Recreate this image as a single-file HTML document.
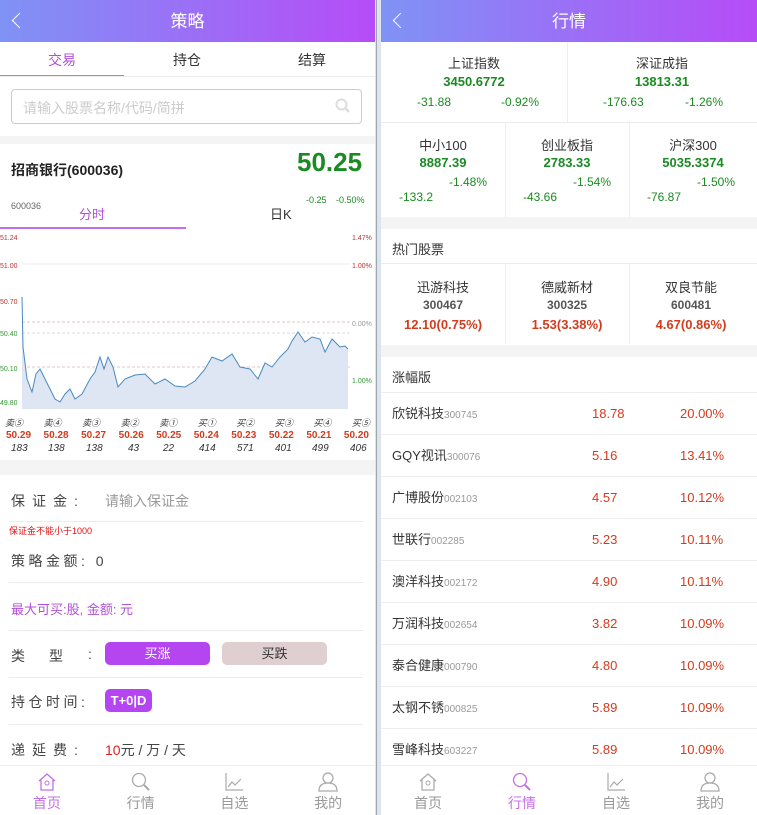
<!DOCTYPE html>
<html><head><meta charset="utf-8"><style>
*{margin:0;padding:0;box-sizing:border-box}
body{width:757px;height:815px;overflow:hidden;background:#dfe3ee;font-family:"Liberation Sans","Noto Sans CJK SC",sans-serif;position:relative}
.p{position:absolute;top:0;height:815px;background:#fff;overflow:hidden}
.a{position:absolute;white-space:nowrap}
.hd{position:absolute;left:0;top:0;height:42px;width:100%;background:linear-gradient(90deg,#7f93f5,#b64cf7);color:#fff;font-size:17px;text-align:center;line-height:44px}
.bk{position:absolute;left:14px;top:15px;width:11px;height:11px;border-left:1.5px solid #fff;border-bottom:1.5px solid #fff;transform:rotate(45deg)}
.g{color:#1b8a22}.r{color:#d23c1e}
.hl{position:absolute;height:1px;background:#ececec}
.tab{position:absolute;bottom:0;height:50px;left:0;width:100%;background:#fff;border-top:1px solid #eee}
.ti{position:absolute;top:0;width:25%;text-align:center;color:#999;font-size:14px}
.ti span{position:absolute;top:27px;left:0;width:100%}
.ti svg{position:absolute;top:5px;left:50%;margin-left:-11px}
.row{position:relative;height:42px;line-height:42px;border-bottom:1px solid #eee}
.row span{position:absolute;top:0}
.row small{font-size:10px;color:#999}
</style></head><body>
<!-- LEFT -->
<div class="p" style="left:0;width:375px">
<div class="hd">策略<div class="bk"></div></div>
<div class="a" style="left:48px;top:50px;font-size:14px;color:#b24fd8">交易</div>
<div class="a" style="left:173px;top:50px;font-size:14px;color:#333">持仓</div>
<div class="a" style="left:298px;top:50px;font-size:14px;color:#333">结算</div>
<div class="a" style="left:0;top:75px;width:124px;height:2px;background:#b87ee0"></div>
<div class="hl" style="left:0;top:76px;width:375px"></div>
<div class="a" style="left:11px;top:89px;width:351px;height:35px;border:1px solid #ccc;border-radius:4px"></div>
<div class="a" style="left:23px;top:98px;font-size:14px;color:#ccc">请输入股票名称/代码/简拼</div>
<svg class="a" style="left:335px;top:98px" width="16" height="16"><circle cx="6.5" cy="6.5" r="5" fill="none" stroke="#ddd" stroke-width="2"/><line x1="10" y1="10" x2="14" y2="14" stroke="#ddd" stroke-width="2.5"/></svg>
<div class="a" style="left:0;top:136px;width:375px;height:8px;background:#f4f4f4"></div>
<div class="a" style="left:11px;top:160px;font-size:14px;color:#222;font-weight:bold">招商银行(600036)</div>
<div class="a g" style="left:297px;top:147px;font-size:26px;font-weight:bold">50.25</div>
<div class="a g" style="left:306px;top:195px;font-size:9px">-0.25</div>
<div class="a g" style="left:336px;top:195px;font-size:9px">-0.50%</div>
<div class="a" style="left:11px;top:201px;font-size:9px;color:#666">600036</div>
<div class="a" style="left:79px;top:204px;font-size:13px;color:#b24fd8">分时</div>
<div class="a" style="left:270px;top:204px;font-size:13px;color:#333">日K</div>
<div class="a" style="left:0;top:227px;width:186px;height:2px;background:#c46fe7"></div>
<svg class="a" style="left:0;top:229px" width="375" height="185">
<g font-size="7" font-family="Liberation Sans">
<text x="0" y="11" fill="#b33">51.24</text><text x="352" y="11" fill="#b33">1.47%</text>
<text x="0" y="39" fill="#b33">51.00</text><text x="352" y="39" fill="#b33">1.00%</text>
<text x="0" y="75" fill="#b33">50.70</text><text x="352" y="97" fill="#999">0.00%</text>
<text x="0" y="107" fill="#393">50.40</text><text x="0" y="142" fill="#393">50.10</text>
<text x="352" y="154" fill="#393">1.00%</text><text x="0" y="176" fill="#393">49.80</text>
</g>
<line x1="22" y1="35" x2="350" y2="35" stroke="#eee"/>
<line x1="22" y1="93" x2="350" y2="93" stroke="#e8c0c0" stroke-dasharray="3,2"/>
<line x1="22" y1="104" x2="350" y2="104" stroke="#ddd" stroke-dasharray="3,2"/>
<line x1="22" y1="138" x2="350" y2="138" stroke="#e8c0c0" stroke-dasharray="3,2"/>
<path d="M22,68 L23,118 27,150 32,163 36,145 40,140 45,150 50,160 55,170 60,173 65,165 70,160 75,170 82,165 90,150 95,143 100,128 104,140 108,128 113,138 118,158 125,150 135,146 145,145 155,155 165,150 175,157 185,158 195,152 205,140 212,128 222,132 232,125 240,138 250,140 258,150 265,134 272,138 280,128 288,120 292,112 298,103 305,113 312,108 320,110 325,123 332,110 340,118 345,117 348,120 L348,180 22,180Z" fill="#dde6f2"/>
<path d="M22,68 L23,118 27,150 32,163 36,145 40,140 45,150 50,160 55,170 60,173 65,165 70,160 75,170 82,165 90,150 95,143 100,128 104,140 108,128 113,138 118,158 125,150 135,146 145,145 155,155 165,150 175,157 185,158 195,152 205,140 212,128 222,132 232,125 240,138 250,140 258,150 265,134 272,138 280,128 288,120 292,112 298,103 305,113 312,108 320,110 325,123 332,110 340,118 345,117 348,120" fill="none" stroke="#4a8ac0" stroke-width="1"/>
</svg>
<div class="a" style="left:0;top:416px;width:375px;font-size:9px">
<div style="display:flex;justify-content:space-between;padding:0 5px 0 5px;text-align:center;font-style:italic;color:#333">
<span>卖⑤</span><span>卖④</span><span>卖③</span><span>卖②</span><span>卖①</span><span>买①</span><span>买②</span><span>买③</span><span>买④</span><span>买⑤</span></div></div>
<div class="a r" style="left:0;top:430px;width:375px;font-size:10px;font-weight:bold;display:flex;justify-content:space-between;padding:0 6px">
<span>50.29</span><span>50.28</span><span>50.27</span><span>50.26</span><span>50.25</span><span>50.24</span><span>50.23</span><span>50.22</span><span>50.21</span><span>50.20</span></div>
<div class="a" style="left:0;top:443px;width:375px;font-size:10px;font-style:italic;color:#333;display:flex;padding:0 0 0 11px">
<span style="width:37px">183</span><span style="width:38px">138</span><span style="width:42px">138</span><span style="width:35px">43</span><span style="width:36px">22</span><span style="width:38px">414</span><span style="width:38px">571</span><span style="width:37px">401</span><span style="width:38px">499</span><span>406</span></div>
<div class="a" style="left:0;top:460px;width:375px;height:15px;background:#f4f4f4"></div>
<div class="a" style="left:11px;top:491px;font-size:14px;color:#444;letter-spacing:7px">保证金:</div>
<div class="a" style="left:105px;top:491px;font-size:14px;color:#999">请输入保证金</div>
<div class="hl" style="left:9px;top:521px;width:354px"></div>
<div class="a" style="left:9px;top:524px;font-size:9px;color:#e01010">保证金不能小于1000</div>
<div class="a" style="left:11px;top:551px;font-size:14px;color:#444;letter-spacing:3.5px">策略金额: 0</div>
<div class="hl" style="left:9px;top:582px;width:354px"></div>
<div class="a" style="left:11px;top:599px;font-size:13px;color:#b24fd8">最大可买:股, 金额: 元</div>
<div class="hl" style="left:9px;top:630px;width:354px"></div>
<div class="a" style="left:11px;top:646px;font-size:14px;color:#444">类</div>
<div class="a" style="left:49px;top:646px;font-size:14px;color:#444">型</div>
<div class="a" style="left:88px;top:646px;font-size:14px;color:#444">:</div>
<div class="a" style="left:105px;top:642px;width:105px;height:23px;background:#b445f0;border-radius:5px;color:#fff;font-size:13px;text-align:center;line-height:23px">买涨</div>
<div class="a" style="left:222px;top:642px;width:105px;height:23px;background:#e0cfd1;border-radius:5px;color:#333;font-size:13px;text-align:center;line-height:23px">买跌</div>
<div class="hl" style="left:9px;top:677px;width:354px"></div>
<div class="a" style="left:11px;top:692px;font-size:14px;color:#444;letter-spacing:3.5px">持仓时间:</div>
<div class="a" style="left:105px;top:689px;width:47px;height:23px;background:#b445f0;border-radius:5px;color:#fff;font-size:13px;text-align:center;line-height:23px;font-weight:bold">T+0|D</div>
<div class="hl" style="left:9px;top:724px;width:354px"></div>
<div class="a" style="left:11px;top:740px;font-size:14px;color:#444;letter-spacing:7px">递延费:</div>
<div class="a" style="left:105px;top:740px;font-size:14px;color:#444"><span style="color:#e02020">10</span>元 / 万 / 天</div>
<div class="tab">
<div class="ti" style="left:0;color:#c46fe7"><svg width="22" height="22"><path d="M3,10 L11,3 19,10 M5,9 V19 H17 V9" fill="none" stroke="#c46fe7" stroke-width="1.3"/><circle cx="11" cy="12" r="2" fill="none" stroke="#c46fe7"/></svg><span>首页</span></div>
<div class="ti" style="left:25%"><svg width="22" height="22"><circle cx="9" cy="9" r="6.5" fill="none" stroke="#aaa" stroke-width="1.3"/><line x1="14" y1="14" x2="19" y2="19" stroke="#aaa" stroke-width="2"/></svg><span>行情</span></div>
<div class="ti" style="left:50%"><svg width="22" height="22"><path d="M3,2 V19 H20 M5,16 L9,11 12,14 18,8" fill="none" stroke="#aaa" stroke-width="1.2"/></svg><span>自选</span></div>
<div class="ti" style="left:75%"><svg width="22" height="22"><circle cx="11" cy="7" r="5" fill="none" stroke="#aaa" stroke-width="1.3"/><path d="M2,20 Q2,12 11,12 Q20,12 20,20 Z" fill="none" stroke="#aaa" stroke-width="1.3"/></svg><span>我的</span></div>
</div>
</div>
<div class="a" style="left:376px;top:0;width:1px;height:815px;background:#9aa"></div>
<!-- RIGHT -->
<div class="p" style="left:381px;width:376px">
<div class="hd">行情<div class="bk"></div></div>
<div class="a" style="left:0;top:53px;width:186px;text-align:center;font-size:13px;color:#333">上证指数</div>
<div class="a g" style="left:0;top:74px;width:186px;text-align:center;font-size:13px;font-weight:bold">3450.6772</div>
<div class="a g" style="left:36px;top:95px;font-size:12px">-31.88</div>
<div class="a g" style="left:120px;top:95px;font-size:12px">-0.92%</div>
<div class="a" style="left:186px;top:43px;width:1px;height:79px;background:#eee"></div>
<div class="a" style="left:186px;top:53px;width:190px;text-align:center;font-size:13px;color:#333">深证成指</div>
<div class="a g" style="left:186px;top:74px;width:190px;text-align:center;font-size:13px;font-weight:bold">13813.31</div>
<div class="a g" style="left:222px;top:95px;font-size:12px">-176.63</div>
<div class="a g" style="left:304px;top:95px;font-size:12px">-1.26%</div>
<div class="hl" style="left:0;top:122px;width:376px"></div>
<div class="a" style="left:0;top:135px;width:124px;text-align:center;font-size:13px;color:#333">中小100</div>
<div class="a g" style="left:0;top:155px;width:124px;text-align:center;font-size:13px;font-weight:bold">8887.39</div>
<div class="a g" style="left:68px;top:175px;font-size:12px">-1.48%</div>
<div class="a g" style="left:18px;top:190px;font-size:12px">-133.2</div>
<div class="a" style="left:124px;top:123px;width:1px;height:94px;background:#eee"></div>
<div class="a" style="left:124px;top:135px;width:124px;text-align:center;font-size:13px;color:#333">创业板指</div>
<div class="a g" style="left:124px;top:155px;width:124px;text-align:center;font-size:13px;font-weight:bold">2783.33</div>
<div class="a g" style="left:192px;top:175px;font-size:12px">-1.54%</div>
<div class="a g" style="left:142px;top:190px;font-size:12px">-43.66</div>
<div class="a" style="left:248px;top:123px;width:1px;height:94px;background:#eee"></div>
<div class="a" style="left:248px;top:135px;width:128px;text-align:center;font-size:13px;color:#333">沪深300</div>
<div class="a g" style="left:248px;top:155px;width:128px;text-align:center;font-size:13px;font-weight:bold">5035.3374</div>
<div class="a g" style="left:316px;top:175px;font-size:12px">-1.50%</div>
<div class="a g" style="left:266px;top:190px;font-size:12px">-76.87</div>
<div class="a" style="left:0;top:217px;width:376px;height:12px;background:#f4f4f4"></div>
<div class="a" style="left:11px;top:239px;font-size:13px;color:#333">热门股票</div>
<div class="hl" style="left:0;top:263px;width:376px"></div>
<div class="a" style="left:124px;top:264px;width:1px;height:80px;background:#eee"></div>
<div class="a" style="left:248px;top:264px;width:1px;height:80px;background:#eee"></div>
<div class="a" style="left:0;top:277px;width:124px;text-align:center;font-size:13px;color:#333">迅游科技</div>
<div class="a" style="left:0;top:298px;width:124px;text-align:center;font-size:12px;color:#555;font-weight:bold">300467</div>
<div class="a r" style="left:0;top:317px;width:124px;text-align:center;font-size:13px;font-weight:bold">12.10(0.75%)</div>
<div class="a" style="left:124px;top:277px;width:124px;text-align:center;font-size:13px;color:#333">德威新材</div>
<div class="a" style="left:124px;top:298px;width:124px;text-align:center;font-size:12px;color:#555;font-weight:bold">300325</div>
<div class="a r" style="left:124px;top:317px;width:124px;text-align:center;font-size:13px;font-weight:bold">1.53(3.38%)</div>
<div class="a" style="left:248px;top:277px;width:124px;text-align:center;font-size:13px;color:#333">双良节能</div>
<div class="a" style="left:248px;top:298px;width:124px;text-align:center;font-size:12px;color:#555;font-weight:bold">600481</div>
<div class="a r" style="left:248px;top:317px;width:124px;text-align:center;font-size:13px;font-weight:bold">4.67(0.86%)</div>
<div class="a" style="left:0;top:345px;width:376px;height:12px;background:#f4f4f4"></div>
<div class="a" style="left:11px;top:367px;font-size:13px;color:#333">涨幅版</div>
<div class="a" style="left:0;top:392px;width:376px;font-size:13px;border-top:1px solid #eee">
<div class="row"><span style="left:11px;color:#333">欣锐科技<small>300745</small></span><span class="r" style="left:211px">18.78</span><span class="r" style="left:299px">20.00%</span></div>
<div class="row"><span style="left:11px;color:#333">GQY视讯<small>300076</small></span><span class="r" style="left:211px">5.16</span><span class="r" style="left:299px">13.41%</span></div>
<div class="row"><span style="left:11px;color:#333">广博股份<small>002103</small></span><span class="r" style="left:211px">4.57</span><span class="r" style="left:299px">10.12%</span></div>
<div class="row"><span style="left:11px;color:#333">世联行<small>002285</small></span><span class="r" style="left:211px">5.23</span><span class="r" style="left:299px">10.11%</span></div>
<div class="row"><span style="left:11px;color:#333">澳洋科技<small>002172</small></span><span class="r" style="left:211px">4.90</span><span class="r" style="left:299px">10.11%</span></div>
<div class="row"><span style="left:11px;color:#333">万润科技<small>002654</small></span><span class="r" style="left:211px">3.82</span><span class="r" style="left:299px">10.09%</span></div>
<div class="row"><span style="left:11px;color:#333">泰合健康<small>000790</small></span><span class="r" style="left:211px">4.80</span><span class="r" style="left:299px">10.09%</span></div>
<div class="row"><span style="left:11px;color:#333">太钢不锈<small>000825</small></span><span class="r" style="left:211px">5.89</span><span class="r" style="left:299px">10.09%</span></div>
<div class="row"><span style="left:11px;color:#333">雪峰科技<small>603227</small></span><span class="r" style="left:211px">5.89</span><span class="r" style="left:299px">10.09%</span></div>
</div>
<div class="tab">
<div class="ti" style="left:0"><svg width="22" height="22"><path d="M3,10 L11,3 19,10 M5,9 V19 H17 V9" fill="none" stroke="#aaa" stroke-width="1.3"/><circle cx="11" cy="12" r="2" fill="none" stroke="#aaa"/></svg><span>首页</span></div>
<div class="ti" style="left:25%;color:#c46fe7"><svg width="22" height="22"><circle cx="9" cy="9" r="6.5" fill="none" stroke="#c46fe7" stroke-width="1.3"/><line x1="14" y1="14" x2="19" y2="19" stroke="#c46fe7" stroke-width="2"/></svg><span>行情</span></div>
<div class="ti" style="left:50%"><svg width="22" height="22"><path d="M3,2 V19 H20 M5,16 L9,11 12,14 18,8" fill="none" stroke="#aaa" stroke-width="1.2"/></svg><span>自选</span></div>
<div class="ti" style="left:75%"><svg width="22" height="22"><circle cx="11" cy="7" r="5" fill="none" stroke="#aaa" stroke-width="1.3"/><path d="M2,20 Q2,12 11,12 Q20,12 20,20 Z" fill="none" stroke="#aaa" stroke-width="1.3"/></svg><span>我的</span></div>
</div>
</div>
</body></html>
